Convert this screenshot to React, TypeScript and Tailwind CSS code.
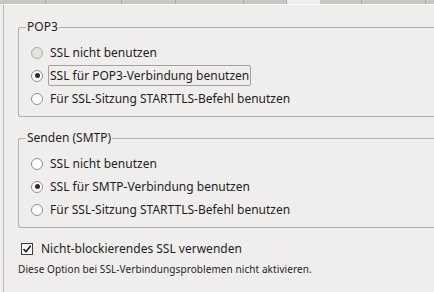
import React from 'react';

const tabs = [
  { w: 46, active: false },
  { w: 76, active: false },
  { w: 54, active: false },
  { w: 68, active: false },
  { w: 43, active: false },
  { w: 33, active: true },
  { w: 42, active: false },
  { w: 64, active: false },
  { w: 20, active: false },
];

const Radio: React.FC<{ label: string; checked?: boolean; dim?: boolean; focused?: boolean }> = ({
  label,
  checked,
  dim,
  focused,
}) => (
  <div className="flex items-center h-[23px] pl-[12px]">
    <span
      className={`w-[12px] h-[12px] rounded-full border flex items-center justify-center shrink-0 ${
        dim ? 'bg-[#e2e4de] border-[#a9aaa5]' : 'bg-white border-[#8f8e8b]'
      }`}
    >
      {checked && <span className="w-[5px] h-[5px] rounded-full bg-[#2b2b2b]" />}
    </span>
    <span
      className={`ml-[5px] px-[1px] h-[21px] flex items-center rounded-[2px] border ${
        focused ? 'border-[#a4a29e]' : 'border-transparent'
      }`}
    >
      {label}
    </span>
  </div>
);

// group box, the right side runs off the window so it is left open
const Group: React.FC<{ title: string; children: React.ReactNode }> = ({ title, children }) => (
  <div className="w-[450px]">
    <div className="flex h-[18px]">
      <div className="w-[8px] mt-[9px] border-t border-l border-[#b2b0ac] rounded-tl-[3px]" />
      <span className="px-[1px] leading-[18px]">{title}</span>
      <div className="flex-1 mt-[9px] border-t border-[#b2b0ac]" />
    </div>
    <div className="border-l border-b border-[#b2b0ac] rounded-bl-[3px] pt-[5px] pb-[6px]">{children}</div>
  </div>
);

export default function App() {
  return (
    <div className="w-[434px] h-[292px] bg-[#efeeec] overflow-hidden text-[12px] text-[#1e1e1e] font-['Noto_Sans',sans-serif]">
      <div className="flex h-[4px]">
        {tabs.map((t, i) => (
          <div
            key={i}
            style={{ width: t.w }}
            className={`shrink-0 ${t.active ? 'bg-[#efeeec]' : 'bg-[#c9c7c3] border-r border-[#a8a6a2]'}`}
          />
        ))}
      </div>
      <div className="ml-[3px] h-[288px] border-l border-t border-[#b9b7b3] border-t-white pl-[14px] pt-[13px]">
        <Group title="POP3">
          <Radio label="SSL nicht benutzen" dim />
          <Radio label="SSL für POP3-Verbindung benutzen" checked focused />
          <Radio label="Für SSL-Sitzung STARTTLS-Befehl benutzen" />
        </Group>
        <div className="h-[12px]" />
        <Group title="Senden (SMTP)">
          <Radio label="SSL nicht benutzen" />
          <Radio label="SSL für SMTP-Verbindung benutzen" checked />
          <Radio label="Für SSL-Sitzung STARTTLS-Befehl benutzen" />
        </Group>
        <div className="flex items-center h-[23px] mt-[9px] pl-[3px]">
          <span className="w-[12px] h-[12px] border border-[#3c3c3c] bg-white flex items-center justify-center">
            <svg width="10" height="10" viewBox="0 0 10 10">
              <path d="M1.5 5 L4 7.8 L8.7 1.8" fill="none" stroke="#1e1e1e" strokeWidth="1.6" />
            </svg>
          </span>
          <span className="ml-[8px]">Nicht-blockierendes SSL verwenden</span>
        </div>
        <div className="text-[10px] leading-[15px] mt-[2px] tracking-[0.08px]">
          Diese Option bei SSL-Verbindungsproblemen nicht aktivieren.
        </div>
      </div>
    </div>
  );
}
